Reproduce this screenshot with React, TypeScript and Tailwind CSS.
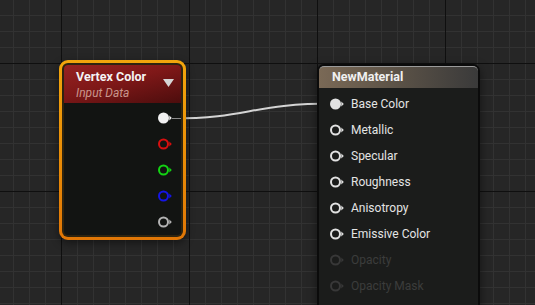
import type { ReactNode } from "react";

const W = 535;
const H = 305;

const minorX = Array.from({ length: 34 }, (_, i) => 13 + i * 16);
const minorY = Array.from({ length: 20 }, (_, i) => 15 + i * 16);
const majorX = [61, 189, 317, 445];
const majorY = [63, 191];

function Grid() {
  return (
    <svg className="absolute inset-0" width={W} height={H}>
      <rect width={W} height={H} fill="#262626" />
      {minorX.map((x) => (
        <rect key={`vx${x}`} x={x} y={0} width={1} height={H} fill="#323232" />
      ))}
      {minorY.map((y) => (
        <rect key={`hy${y}`} x={0} y={y} width={W} height={1} fill="#323232" />
      ))}
      {majorX.map((x) => (
        <rect key={`mx${x}`} x={x} y={0} width={1} height={H} fill="#0f0f0f" />
      ))}
      {majorY.map((y) => (
        <rect key={`my${y}`} x={0} y={y} width={W} height={1} fill="#0f0f0f" />
      ))}
    </svg>
  );
}

function Pin({ color, filled = false }: { color: string; filled?: boolean }) {
  return (
    <svg width="15" height="12" viewBox="0 0 15 12" className="shrink-0">
      {filled ? (
        <circle cx="5.5" cy="6" r="5.5" fill={color} />
      ) : (
        <circle cx="5.5" cy="6" r="4.5" fill="none" stroke={color} strokeWidth="2" />
      )}
      <polygon points="11.3,3.5 13.8,6 11.3,8.5" fill={color} />
    </svg>
  );
}

function Row({ children, className = "" }: { children: ReactNode; className?: string }) {
  return <div className={`flex h-[26px] items-center ${className}`}>{children}</div>;
}

function VertexColorNode() {
  const pins = [
    { color: "#f2f2f2", filled: true },
    { color: "#d80f0f" },
    { color: "#13d313" },
    { color: "#1515e6" },
    { color: "#b4b4b4" },
  ];
  return (
    <div className="absolute left-[59px] top-[60px] h-[180px] w-[127px] rounded-[9px] bg-[linear-gradient(to_bottom,#f2a50c,#e98a06_60%,#e07606)] p-[3px] shadow-[0_3px_8px_rgba(0,0,0,0.45)]">
      <div className="flex h-full flex-col rounded-[6px] bg-[#2e2410] p-[2px]">
        <div className="flex h-full flex-col overflow-hidden rounded-[4px] bg-[#121412]">
          <div className="relative h-[38px] shrink-0 bg-[linear-gradient(165deg,#962222_0%,#7f1818_45%,#4c0d0d_100%)] pl-[12px] pt-[4px]">
            <div className="text-[12.5px] font-bold leading-[16px] text-[#f4f4f4]">Vertex Color</div>
            <div className="text-[12px] italic leading-[16px] text-[#c9968c]">Input Data</div>
            <svg width="11" height="8" viewBox="0 0 11 8" className="absolute right-[7px] top-[14px]">
              <polygon points="0,0 11,0 5.5,8" fill="#d6d6d6" />
            </svg>
          </div>
          <div className="flex flex-col pt-[2px]">
            {pins.map((p, i) => (
              <Row key={i} className="justify-end pr-[8px]">
                <Pin color={p.color} filled={p.filled} />
              </Row>
            ))}
          </div>
        </div>
      </div>
    </div>
  );
}

function MaterialNode() {
  const inputs = [
    { label: "Base Color", filled: true },
    { label: "Metallic" },
    { label: "Specular" },
    { label: "Roughness" },
    { label: "Anisotropy" },
    { label: "Emissive Color" },
    { label: "Opacity", off: true },
    { label: "Opacity Mask", off: true },
  ];
  return (
    <div className="absolute left-[317px] top-[64px] h-[260px] w-[163px] rounded-t-[7px] border-2 border-[#0b0b0b] bg-[#1b1c1b] shadow-[0_3px_10px_rgba(0,0,0,0.5)]">
      <div className="flex h-[22px] items-center rounded-t-[5px] border-t border-[#9a9a9a] bg-[linear-gradient(to_right,#7a6956,#5e5448_45%,#3a3a3a)] pl-[13px]">
        <span className="text-[12.5px] font-bold text-[#f0f0f0]">NewMaterial</span>
      </div>
      <div className="flex flex-col pt-[3px]">
        {inputs.map((r) => (
          <Row key={r.label} className="pl-[11px]">
            <Pin color={r.off ? "#383838" : "#e2e2e2"} filled={r.filled} />
            <span className={`ml-[6px] text-[12px] ${r.off ? "text-[#3c3c3c]" : "text-[#e4e4e4]"}`}>{r.label}</span>
          </Row>
        ))}
      </div>
    </div>
  );
}

export default function App() {
  return (
    <div className="relative h-[305px] w-[535px] overflow-hidden font-['Roboto',sans-serif]">
      <Grid />
      <svg className="absolute inset-0" width={W} height={H}>
        <path d="M172 118.5 C 250 118.5, 250 103.5, 335 103.5" fill="none" stroke="#d4d4d4" strokeWidth="2" />
      </svg>
      <VertexColorNode />
      <MaterialNode />
      <svg className="pointer-events-none absolute inset-0" width={W} height={H}>
        <rect x={172} y={118} width={9} height={1} fill="#8a8a8a" />
      </svg>
    </div>
  );
}
